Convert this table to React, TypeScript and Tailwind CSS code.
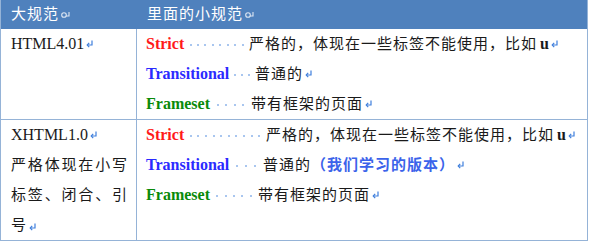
import React from "react";

const Ret = ({ c = "#3f7fdc" }: { c?: string }) => (
  <svg width="7" height="8" viewBox="0 0 7 8" className="inline-block ml-[2px] shrink-0" style={{ verticalAlign: "-1px" }}>
    <path d="M6 0.5V5H1.5" stroke={c} fill="none" strokeWidth="1.2" />
    <path d="M3.2 2.8L1.2 5L3.2 7.2" stroke={c} fill="none" strokeWidth="1.2" />
  </svg>
);

const HdrMark = () => (
  <svg width="9" height="8" viewBox="0 0 9 8" className="inline-block ml-[2px]" style={{ verticalAlign: "0px" }}>
    <circle cx="3" cy="4" r="2.3" stroke="#dce6f3" fill="none" strokeWidth="1.1" />
    <path d="M8 1V5H5" stroke="#dce6f3" fill="none" strokeWidth="1.1" />
  </svg>
);

const Dots = ({ n }: { n: number }) => (
  <span className="flex-1 flex justify-evenly items-center pt-[2px]">
    {Array.from({ length: n }).map((_, i) => (
      <span key={i} className="w-[2px] h-[2px] rounded-full bg-[#8db3ea]" />
    ))}
  </span>
);

const serif = { fontFamily: '"Liberation Serif", "Noto Sans CJK SC", serif' };
const cjk = "text-[15px] tracking-[1px]";

type LineProps = { label: string; color: string; w: number; n: number; children: React.ReactNode };
const Line = ({ label, color, w, n, children }: LineProps) => (
  <div className="flex items-center h-[30px] whitespace-nowrap">
    <span className="flex items-center shrink-0" style={{ width: w }}>
      <span className="font-bold text-[16px]" style={{ color }}>{label}</span>
      <Dots n={n} />
    </span>
    <span className="flex items-center">{children}</span>
  </div>
);

export default function App() {
  return (
    <div className="w-[589px] h-[244px] bg-white text-[#1a1a1a]" style={serif}>
      <div className="w-[588px] border border-[#95b3d7] border-t-0">
        <div className="grid grid-cols-[136px_1fr] h-[29px] bg-[#4f81bd] text-white items-center">
          <div className={`pl-[10px] ${cjk}`}>大规范<HdrMark /></div>
          <div className={`pl-[10px] ${cjk}`}>里面的小规范<HdrMark /></div>
        </div>
        <div className="grid grid-cols-[136px_1fr] border-b border-[#95b3d7]">
          <div className="border-r border-[#95b3d7] pl-[10px]">
            <div className="h-[30px] flex items-center text-[16px]">HTML4.01<Ret /></div>
          </div>
          <div className="pl-[9px]">
            <Line label="Strict" color="#ff1a1a" w={103} n={8}>
              <span className={cjk}>严格的，体现在一些标签不能使用，比如</span>
              <span className="text-[16px] ml-[3px] font-bold">u</span>
              <Ret />
            </Line>
            <Line label="Transitional" color="#2a2aff" w={109} n={3}>
              <span className={cjk}>普通的</span>
              <Ret />
            </Line>
            <Line label="Frameset" color="#0a8a0a" w={105} n={4}>
              <span className={cjk}>带有框架的页面</span>
              <Ret />
            </Line>
          </div>
        </div>
        <div className="grid grid-cols-[136px_1fr]">
          <div className="border-r border-[#95b3d7] pl-[10px] pr-[8px]">
            <div className="h-[30px] flex items-center text-[16px]">XHTML1.0<Ret /></div>
            <div className={`${cjk} leading-[30px] text-justify`}>
              严格体现在小写标签、闭合、引号<Ret />
            </div>
          </div>
          <div className="pl-[9px]">
            <Line label="Strict" color="#ff1a1a" w={120} n={10}>
              <span className={cjk}>严格的，体现在一些标签不能使用，比如</span>
              <span className="text-[16px] ml-[3px] font-bold">u</span>
              <Ret />
            </Line>
            <Line label="Transitional" color="#2a2aff" w={117} n={3}>
              <span className={cjk}>普通的</span>
              <span className={`${cjk} text-[#3b63ea] font-bold`}>（我们学习的版本）</span>
              <Ret />
            </Line>
            <Line label="Frameset" color="#0a8a0a" w={112} n={5}>
              <span className={cjk}>带有框架的页面</span>
              <Ret />
            </Line>
            <div className="h-[30px]" />
          </div>
        </div>
      </div>
    </div>
  );
}
